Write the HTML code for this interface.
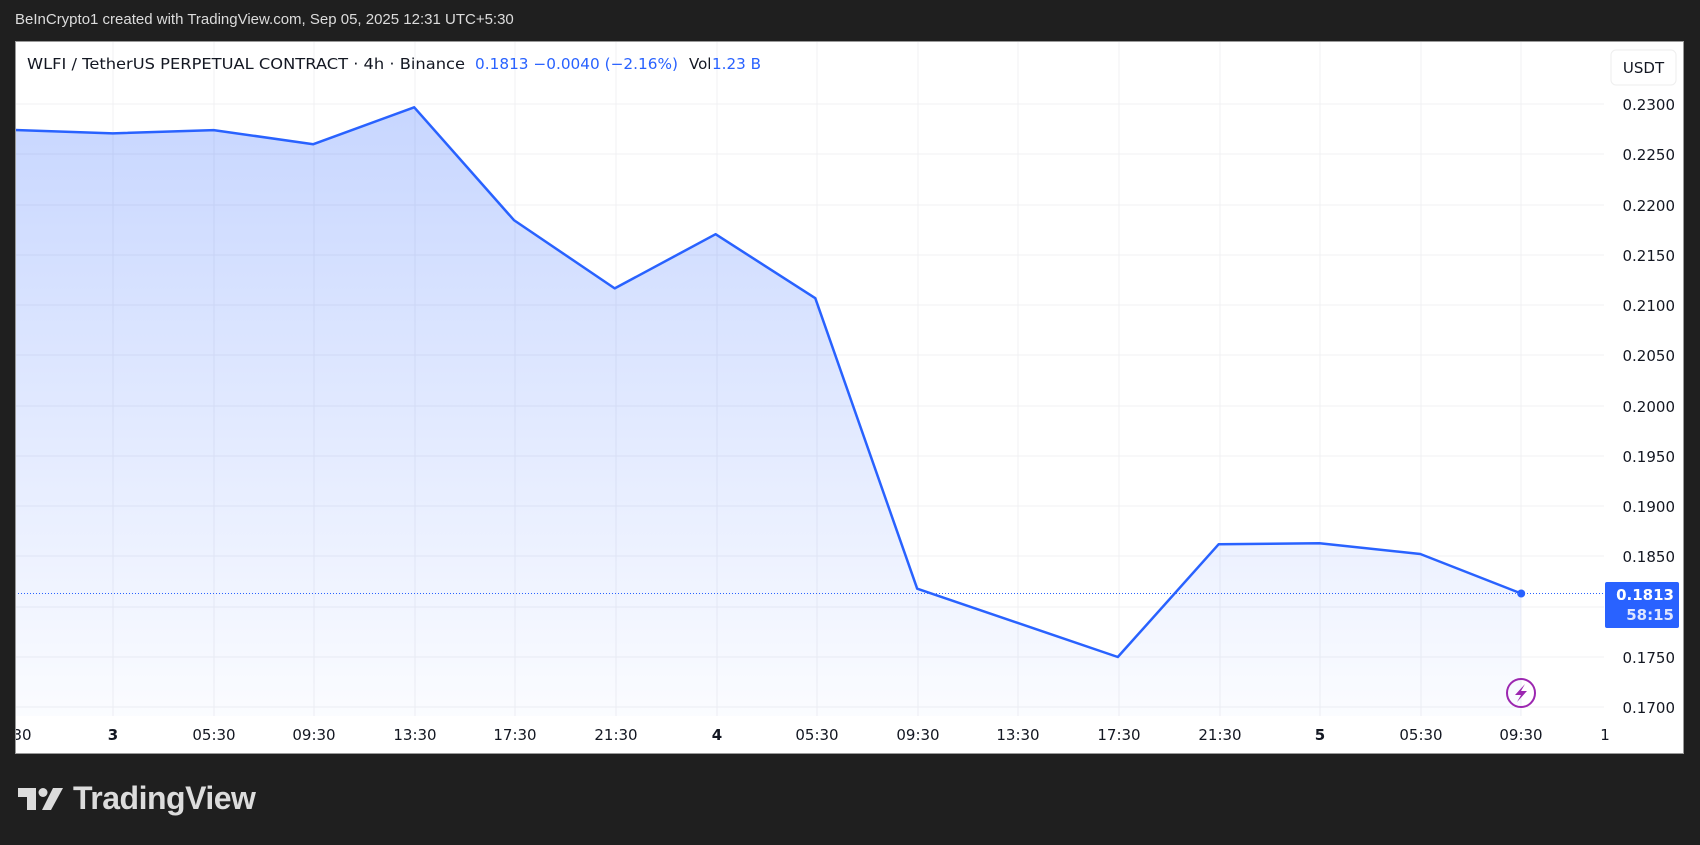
<!DOCTYPE html>
<html><head><meta charset="utf-8"><style>
body{margin:0;width:1700px;height:845px;background:#1f1f1f;position:relative;overflow:hidden;font-family:"Liberation Sans",sans-serif}
.hdr{position:absolute;left:15px;top:11px;color:#dcdcdc;font-size:15px}
.tv{position:absolute;left:73px;top:780px;color:#dcdcdc;font-size:32px;font-weight:bold;letter-spacing:-0.5px}
</style></head><body>
<div class="hdr">BeInCrypto1 created with TradingView.com, Sep 05, 2025 12:31 UTC+5:30</div>
<svg style="position:absolute;left:0;top:0" width="1700" height="845" font-family="DejaVu Sans, sans-serif">
<defs><linearGradient id="g" x1="0" y1="0" x2="0" y2="1"><stop offset="0" stop-color="#2962ff" stop-opacity="0.26"/><stop offset="1" stop-color="#2962ff" stop-opacity="0.02"/></linearGradient>
<clipPath id="c"><rect x="15" y="41" width="1669" height="713"/></clipPath></defs>
<rect x="15" y="41" width="1669" height="713" fill="#fff"/>
<g clip-path="url(#c)">
<g stroke="#f0f0f3" stroke-width="1">
<path d="M15 104H1604M15 154H1604M15 205H1604M15 255H1604M15 305H1604M15 355H1604M15 406H1604M15 456H1604M15 506H1604M15 556H1604M15 607H1604M15 657H1604M15 707H1604"/>
<path d="M113 41V716M214 41V716M314 41V716M415 41V716M515 41V716M616 41V716M717 41V716M817 41V716M918 41V716M1018 41V716M1119 41V716M1220 41V716M1320 41V716M1421 41V716M1521 41V716"/>
</g>
<path d="M15 130L112.8 133.4L213.6 130.1L313.3 144.2L414.2 107.3L513.9 220.1L614.7 288.4L715.6 234.2L815.3 298.2L917.2 588.7L1117.8 657L1218.6 544.3L1319.5 543.2L1420.3 554L1521.2 593.5L1521.2 716L15 716Z" fill="url(#g)"/>
<path d="M15 130L112.8 133.4L213.6 130.1L313.3 144.2L414.2 107.3L513.9 220.1L614.7 288.4L715.6 234.2L815.3 298.2L917.2 588.7L1117.8 657L1218.6 544.3L1319.5 543.2L1420.3 554L1521.2 593.5" fill="none" stroke="#2962ff" stroke-width="2.5" stroke-linejoin="round"/>
<path d="M15 593.5H1605" stroke="#2962ff" stroke-width="1" stroke-dasharray="1 2"/>
<circle cx="1521.2" cy="593.5" r="4" fill="#2962ff"/>
<circle cx="1521" cy="693" r="14" fill="none" stroke="#9c27b0" stroke-width="2"/>
<path d="M1525 684L1515 695H1521L1517 702L1527 691H1521Z" fill="#9c27b0"/>
<rect x="1611" y="50" width="65" height="35" rx="5" fill="#fff" stroke="#eee"/>
<text x="1643.5" y="73" font-size="15" text-anchor="middle" fill="#131722">USDT</text>
<g font-size="15" fill="#131722" text-anchor="end">
<text x="1675" y="110">0.2300</text><text x="1675" y="160">0.2250</text><text x="1675" y="211">0.2200</text><text x="1675" y="261">0.2150</text><text x="1675" y="311">0.2100</text><text x="1675" y="361">0.2050</text><text x="1675" y="412">0.2000</text><text x="1675" y="462">0.1950</text><text x="1675" y="512">0.1900</text><text x="1675" y="562">0.1850</text><text x="1675" y="663">0.1750</text><text x="1675" y="713">0.1700</text>
</g>
<rect x="1605" y="582" width="74" height="46" rx="2" fill="#2962ff"/>
<text x="1674" y="600" font-size="15" font-weight="bold" fill="#fff" text-anchor="end">0.1813</text>
<text x="1674" y="620" font-size="15" font-weight="bold" fill="#dfe6ff" text-anchor="end">58:15</text>
<g font-size="15" fill="#131722" text-anchor="middle">
<text x="22" y="740">30</text><text x="113" y="740" font-weight="bold">3</text><text x="214" y="740">05:30</text><text x="314" y="740">09:30</text><text x="415" y="740">13:30</text><text x="515" y="740">17:30</text><text x="616" y="740">21:30</text><text x="717" y="740" font-weight="bold">4</text><text x="817" y="740">05:30</text><text x="918" y="740">09:30</text><text x="1018" y="740">13:30</text><text x="1119" y="740">17:30</text><text x="1220" y="740">21:30</text><text x="1320" y="740" font-weight="bold">5</text><text x="1421" y="740">05:30</text><text x="1521" y="740">09:30</text><text x="1605" y="740">1</text>
</g>
<g font-size="15">
<text x="27" y="69" fill="#131722" textLength="438" lengthAdjust="spacingAndGlyphs">WLFI / TetherUS PERPETUAL CONTRACT · 4h · Binance</text>
<text x="475" y="69" fill="#2962ff" textLength="203" lengthAdjust="spacingAndGlyphs">0.1813  −0.0040 (−2.16%)</text>
<text x="689" y="69" fill="#131722">Vol</text>
<text x="712" y="69" fill="#2962ff" textLength="49" lengthAdjust="spacingAndGlyphs">1.23 B</text>
</g>
</g>
<rect x="15.5" y="41.5" width="1668" height="712" fill="none" stroke="#999" stroke-width="1"/>
<g fill="#dcdcdc">
<path d="M18 788H36V810H27V797H18Z"/>
<circle cx="43" cy="792.5" r="4.5"/>
<path d="M53 788H63L51 810H42Z"/>
</g>
</svg>
<div class="tv">TradingView</div>
</body></html>
